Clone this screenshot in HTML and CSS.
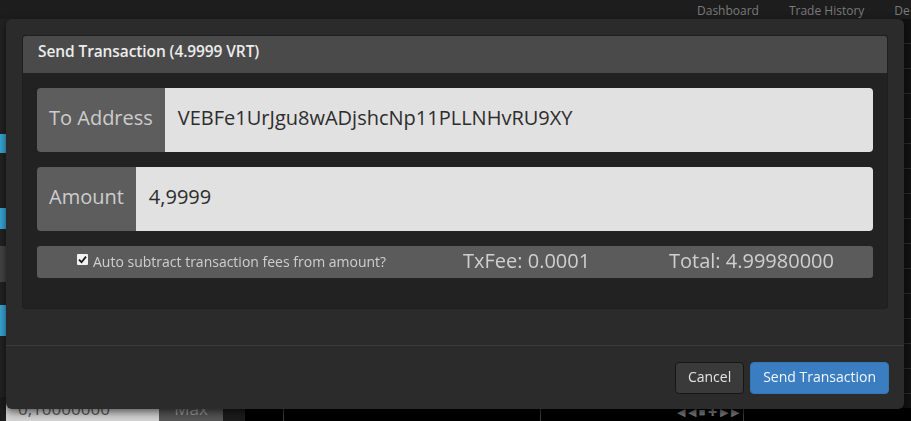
FILE: index.html
```html
<!DOCTYPE html>
<html lang="en">
<head>
    <meta charset="UTF-8">
    <meta name="viewport" content="width=device-width, initial-scale=1.0">
    <title>Send Transaction</title>
    <link rel="stylesheet" href="styles.css">
</head>
<body>
    <nav class="topnav">
        <a href="#">Dashboard</a>
        <a href="#">Trade History</a>
        <a href="#">De</a>
    </nav>
    <div class="workspace">
        <aside class="sidebar">
            <div class="gap gap-118"></div>
            <div class="side-btn blue h-20"></div>
            <div class="gap gap-56"></div>
            <div class="side-btn blue h-22"></div>
            <div class="gap gap-18"></div>
            <div class="side-btn grey h-37"></div>
            <div class="gap gap-23"></div>
            <div class="side-btn blue h-32"></div>
            <div class="gap gap-63"></div>
            <div class="order-row">
                <span class="order-input">0,10000000</span>
                <span class="order-max">Max</span>
            </div>
        </aside>
        <section class="chart">
            <div class="chart-grid"></div>
            <div class="chart-bar">
                <span class="chart-cell w-40"></span>
                <span class="chart-cell w-257"></span>
                <span class="chart-cell w-204 controls">&#9664; &#9664; &#9632; &#10010; &#9654; &#9654;</span>
            </div>
        </section>
    </div>

    <div class="overlay">
        <div class="modal">
            <div class="modal-body">
                <div class="panel">
                    <div class="panel-heading">Send Transaction (4.9999 VRT)</div>
                    <div class="panel-body">
                        <div class="input-group">
                            <span class="addon">To Address</span>
                            <span class="field">VEBFe1UrJgu8wADjshcNp11PLLNHvRU9XY</span>
                        </div>
                        <div class="input-group">
                            <span class="addon">Amount</span>
                            <span class="field">4,9999</span>
                        </div>
                        <div class="summary">
                            <label class="fee-check">
                                <span class="check">
                                    <svg width="9" height="9" viewBox="0 0 9 9"><path d="M1 4.6 L3.5 7.2 L8 1.6" fill="none" stroke="#1a1a1a" stroke-width="1.8"/></svg>
                                </span>
                                Auto subtract transaction fees from amount?
                            </label>
                            <span class="fee">TxFee: 0.0001</span>
                            <span class="fee">Total: 4.99980000</span>
                        </div>
                    </div>
                </div>
            </div>
            <div class="modal-footer">
                <button type="button" class="btn btn-cancel">Cancel</button>
                <button type="button" class="btn btn-send">Send Transaction</button>
            </div>
        </div>
    </div>
</body>
</html>
```

FILE: styles.css
```css
body {
    font-family: "Open Sans", "Liberation Sans", sans-serif;
    margin: 0;
    padding: 0;
    background-color: #1b1b1b;
    width: 911px;
    height: 421px;
    overflow: hidden;
}

.topnav {
    height: 19px;
    padding-left: 697px;
    display: flex;
    gap: 30px;
    white-space: nowrap;
    overflow: hidden;
    background-color: #1d1d1d;
}

.topnav a {
    color: #7b7b7b;
    font-size: 12px;
    line-height: 21px;
    text-decoration: none;
}

.workspace {
    display: flex;
    height: 402px;
}

.sidebar {
    width: 245px;
    display: flex;
    flex-direction: column;
    background-color: #222;
}

.gap-118 { height: 118px; }
.gap-56 { height: 56px; }
.gap-18 { height: 18px; }
.gap-23 { height: 23px; }
.gap-63 { height: 63px; }

.h-20 { height: 20px; }
.h-22 { height: 22px; }
.h-37 { height: 37px; }
.h-32 { height: 32px; }

.side-btn.blue {
    background-color: #39a6d6;
}

.side-btn.grey {
    background-color: #454545;
}

.order-row {
    display: flex;
    height: 24px;
    padding-left: 6px;
    background-color: #1c1c1c;
}

.order-input {
    width: 141px;
    background-color: #d2d2d2;
    color: #555;
    font-size: 17px;
    line-height: 24px;
    padding-left: 12px;
}

.order-max {
    width: 64px;
    background-color: #555;
    color: #999;
    font-size: 17px;
    line-height: 24px;
    text-align: center;
}

.chart {
    flex: 1;
    display: flex;
    flex-direction: column;
    background-color: #121212;
}

.chart-grid {
    flex: 1;
    background-image: repeating-linear-gradient(to bottom, transparent 0, transparent 24px, #2c2c2c 24px, #2c2c2c 25px);
}

.chart-bar {
    height: 13px;
    display: flex;
    background-color: #000;
}

.chart-cell {
    border-right: 1px solid #3a3a3a;
}

.w-40 { width: 38px; }
.w-257 { width: 256px; }
.w-204 { width: 203px; }

.controls {
    color: #777;
    font-size: 11px;
    line-height: 8px;
    text-align: right;
    padding-right: 4px;
    box-sizing: border-box;
}

/* modal */

.overlay {
    position: fixed;
    top: 0;
    left: 0;
    width: 100%;
    height: 100%;
    padding: 19px 0 0 6px;
    box-sizing: border-box;
}

.modal {
    width: 898px;
    background-color: #2b2b2b;
    border-radius: 6px;
    box-shadow: 0 3px 8px rgba(0, 0, 0, 0.6);
}

.modal-body {
    padding: 16px 16px 36px;
}

.panel {
    background-color: #222;
    border: 1px solid #1e1e1e;
    border-radius: 3px;
}

.panel-heading {
    height: 37px;
    background-color: #4a4a4a;
    color: #ececec;
    font-size: 15.5px;
    font-weight: 600;
    line-height: 31px;
    padding-left: 15px;
    letter-spacing: -0.1px;
    border-radius: 3px 3px 0 0;
}

.panel-body {
    padding: 15px 14px 30px;
    display: flex;
    flex-direction: column;
    gap: 15px;
}

.input-group {
    display: flex;
    height: 64px;
}

.addon {
    background-color: #5d5d5d;
    color: #cdcdcd;
    font-size: 20px;
    line-height: 60px;
    padding: 0 12px;
    border-radius: 4px 0 0 4px;
}

.field {
    flex: 1;
    background-color: #e1e1e1;
    color: #2d2d2d;
    font-size: 20px;
    line-height: 60px;
    padding-left: 13px;
    border-radius: 0 4px 4px 0;
}

.summary {
    height: 32px;
    display: grid;
    grid-template-columns: 426px 206px 1fr;
    align-items: center;
    background-color: #5b5b5b;
    border-radius: 3px;
    color: #cfcfcf;
}

.fee-check {
    display: flex;
    align-items: center;
    gap: 5px;
    padding-left: 40px;
    font-size: 14px;
    margin-top: -2px;
}

.check {
    width: 11px;
    height: 11px;
    background-color: #f2f2f2;
    border-radius: 1px;
    display: flex;
    align-items: center;
    justify-content: center;
    margin-top: -3px;
}

.fee {
    font-size: 20px;
    margin-top: -3px;
}

.modal-footer {
    border-top: 1px solid #3c3c3c;
    padding: 16px 15px 15px;
    display: flex;
    justify-content: flex-end;
    gap: 6px;
}

.btn {
    height: 32px;
    font-family: "Open Sans", "Liberation Sans", sans-serif;
    font-size: 14px;
    padding: 0 12px 4px;
    border-radius: 4px;
    cursor: pointer;
}

.btn-cancel {
    background-color: #3a3a3a;
    color: #e4e4e4;
    border: 1px solid #161616;
}

.btn-send {
    background-color: #3a7ec1;
    color: #f2f6fa;
    border: 1px solid #3476b6;
}
```
